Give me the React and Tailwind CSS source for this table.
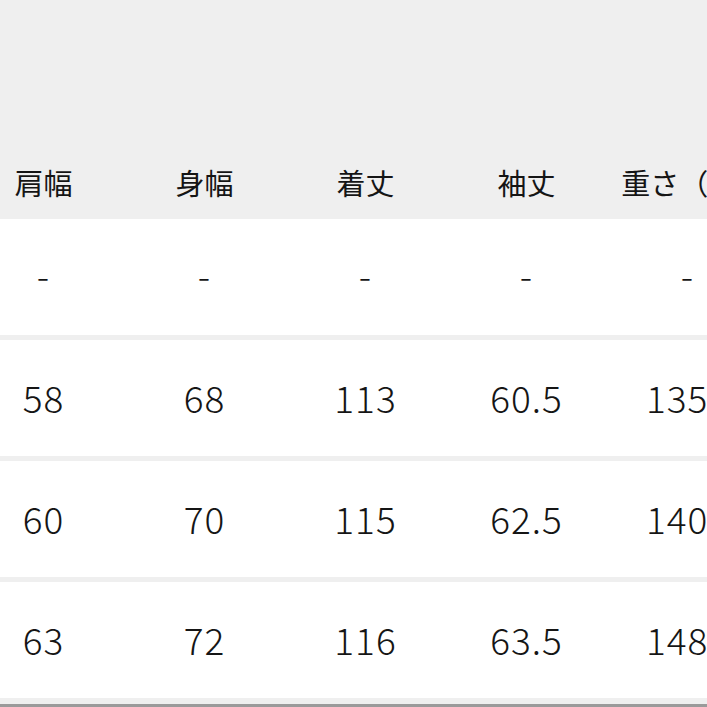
import React from "react";

const headers = ["肩幅", "身幅", "着丈", "袖丈", "重さ（g）"];
const rows = [
  ["-", "-", "-", "-", "-"],
  ["58", "68", "113", "60.5", "1350"],
  ["60", "70", "115", "62.5", "1400"],
  ["63", "72", "116", "63.5", "1480"],
];

export default function App() {
  return (
    <div
      className="w-[707px] h-[707px] overflow-hidden bg-[#efefef] text-[#151515]"
      style={{ fontFamily: '"Noto Sans CJK JP", "Noto Sans", sans-serif' }}
    >
      <div className="h-[147px]" />
      {/* Header row */}
      <div className="ml-[-37px] grid grid-cols-[repeat(5,161px)] h-[72px] items-center">
        {headers.map((h) => (
          <div key={h} className="text-center text-[29px] whitespace-nowrap leading-none pb-[1px]">
            {h}
          </div>
        ))}
      </div>

      {/* Body rows */}
      <div className="flex flex-col gap-[5px]">
        {rows.map((r, i) => (
          <div
            key={i}
            className="bg-white ml-[-37px] w-[805px] grid grid-cols-[repeat(5,161px)] h-[116px] items-center"
          >
            {r.map((v, j) => (
              <div
                key={j}
                className={
                  "text-center text-[37px] leading-none whitespace-nowrap tracking-[1px] font-light " +
                  (i === 0 ? "pb-[6px]" : "pb-[1px]")
                }
              >
                {v}
              </div>
            ))}
          </div>
        ))}
      </div>
      <div className="h-[6px]" />
      <div className="h-[4px] bg-[#9a9a9a]" />
    </div>
  );
}
